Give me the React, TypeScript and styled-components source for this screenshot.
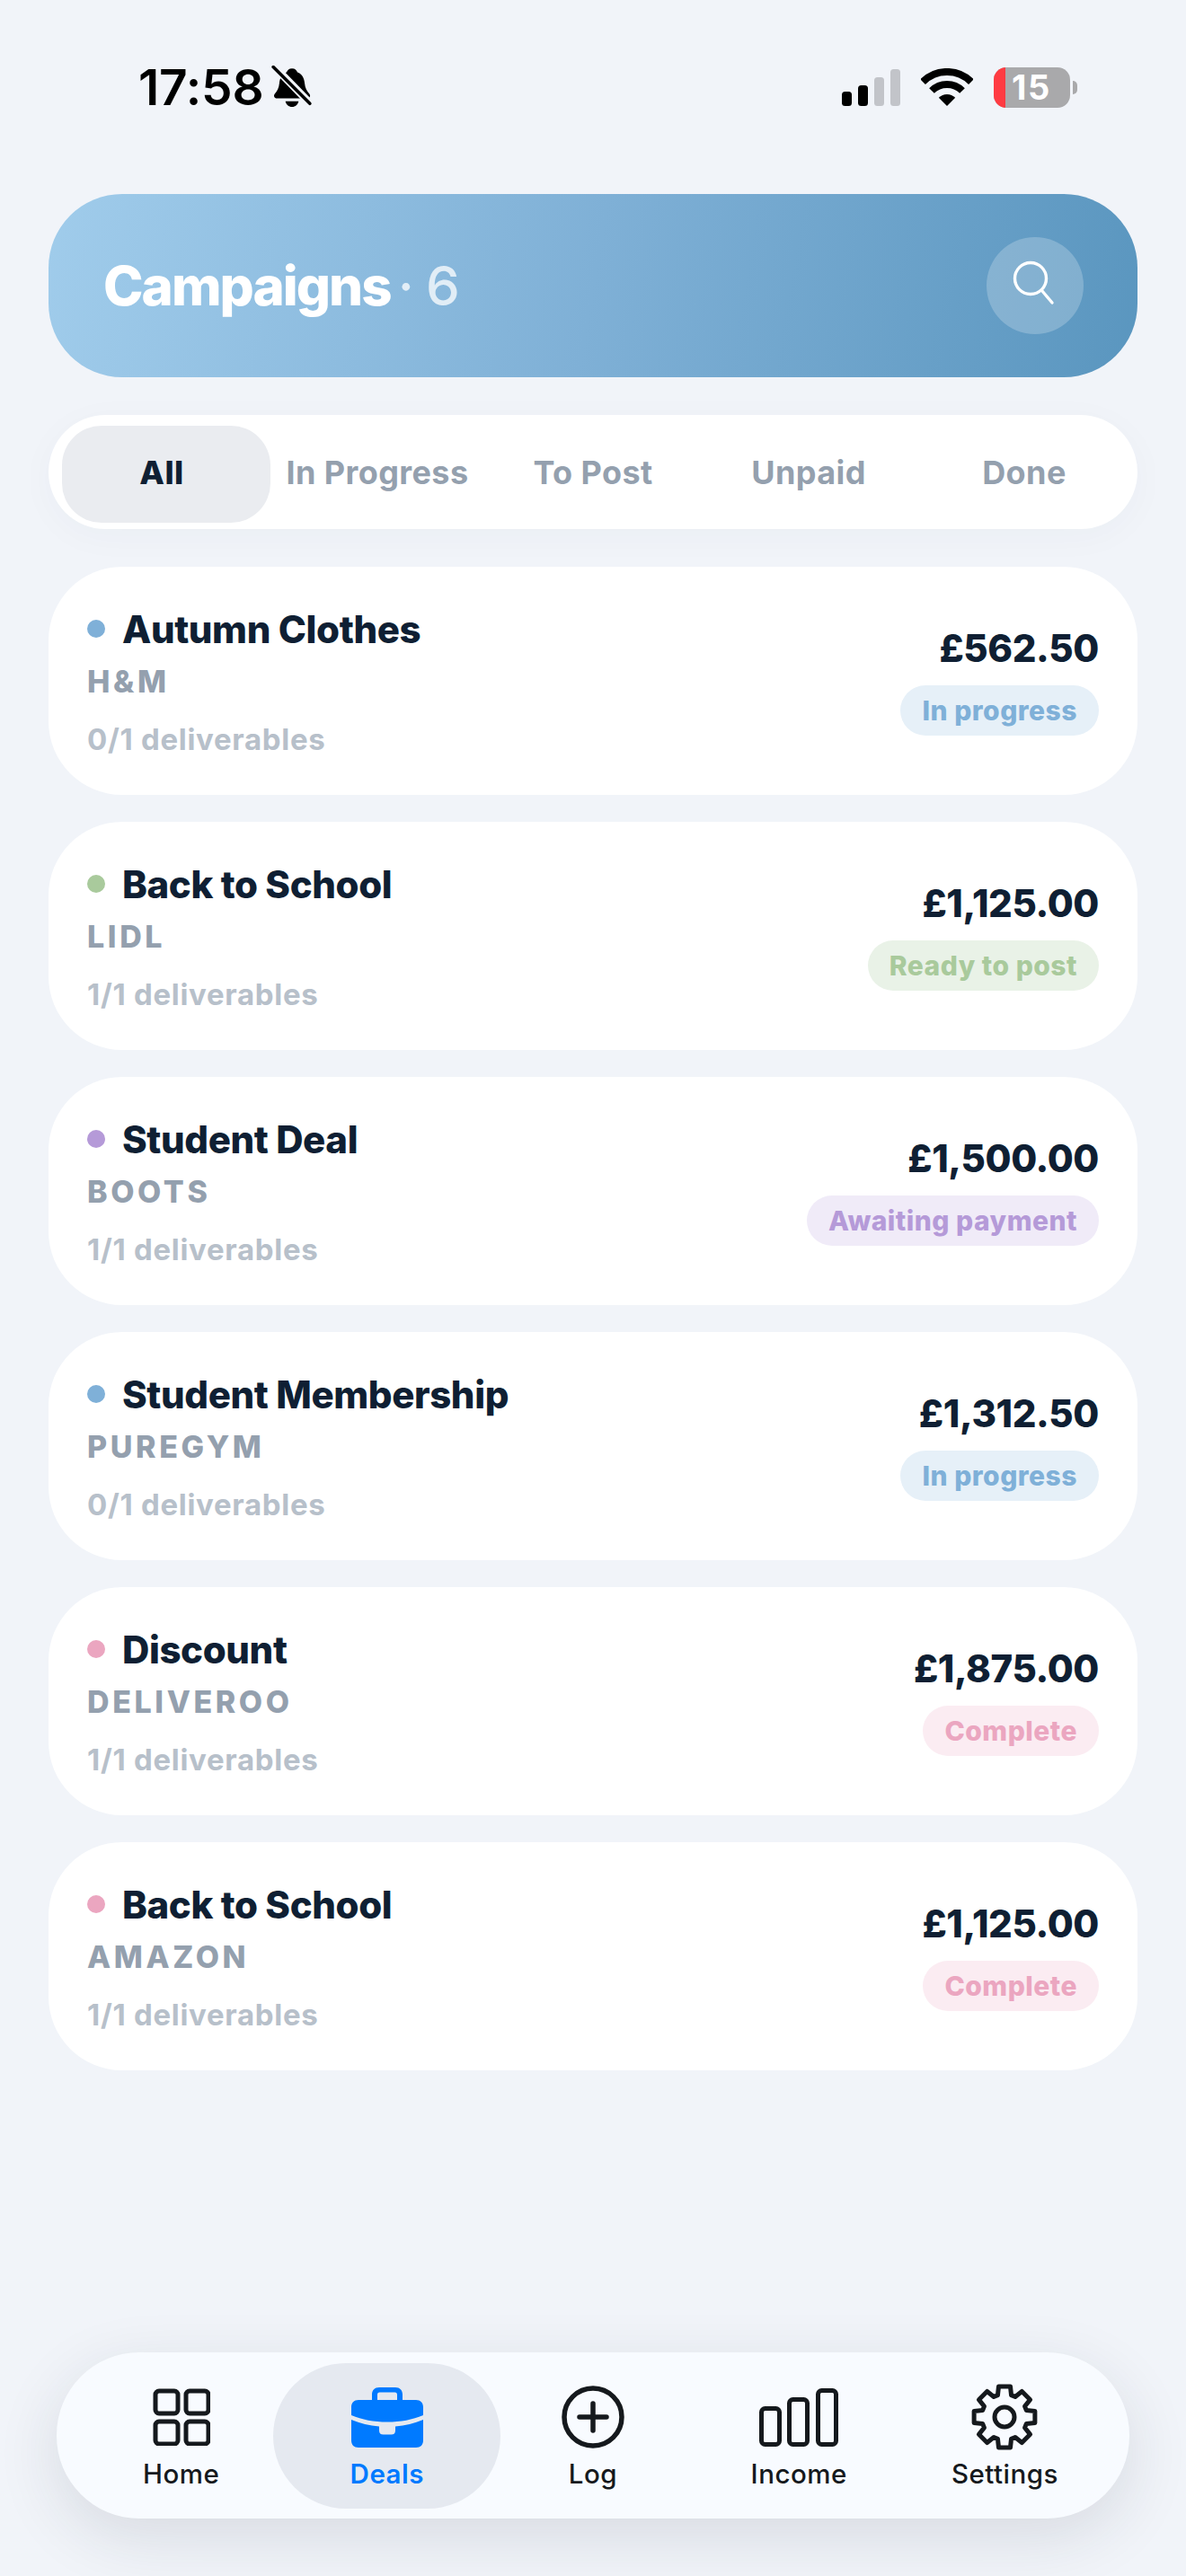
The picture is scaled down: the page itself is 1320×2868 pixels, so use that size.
import * as React from "react";
import styled, { createGlobalStyle } from "styled-components";

type Status = "progress" | "ready" | "awaiting" | "complete";

interface IDeal {
  title: string;
  brand: string;
  deliverables: string;
  price: string;
  status: Status;
}

const statusColors: Record<Status, { main: string; soft: string; label: string }> = {
  progress: { main: "#7fb0d8", soft: "#e6f0f8", label: "In progress" },
  ready: { main: "#a9ca9c", soft: "#e9f2e7", label: "Ready to post" },
  awaiting: { main: "#b59ad8", soft: "#f0ebf8", label: "Awaiting payment" },
  complete: { main: "#eba6c0", soft: "#fbecf2", label: "Complete" },
};

const deals: IDeal[] = [
  { title: "Autumn Clothes", brand: "H&M", deliverables: "0/1 deliverables", price: "£562.50", status: "progress" },
  { title: "Back to School", brand: "LIDL", deliverables: "1/1 deliverables", price: "£1,125.00", status: "ready" },
  { title: "Student Deal", brand: "BOOTS", deliverables: "1/1 deliverables", price: "£1,500.00", status: "awaiting" },
  { title: "Student Membership", brand: "PUREGYM", deliverables: "0/1 deliverables", price: "£1,312.50", status: "progress" },
  { title: "Discount", brand: "DELIVEROO", deliverables: "1/1 deliverables", price: "£1,875.00", status: "complete" },
  { title: "Back to School", brand: "AMAZON", deliverables: "1/1 deliverables", price: "£1,125.00", status: "complete" },
];

const tabs = ["All", "In Progress", "To Post", "Unpaid", "Done"];

// 8 toothed cog outline for the settings tab
const gearPath = (() => {
  const cx = 37;
  const cy = 37;
  const pts: string[] = [];
  for (let i = 0; i < 8; i++) {
    const a = (i * Math.PI) / 4 - Math.PI / 2;
    const add = (r: number, d: number) =>
      pts.push(`${(cx + r * Math.cos(a + d)).toFixed(2)} ${(cy + r * Math.sin(a + d)).toFixed(2)}`);
    add(25.5, -0.3);
    add(34.5, -0.19);
    add(34.5, 0.19);
    add(25.5, 0.3);
  }
  return "M" + pts.join("L") + "Z";
})();

const GlobalStyle = createGlobalStyle`
  html, body {
    margin: 0;
    padding: 0;
    background: #f1f4f9;
  }
  * {
    box-sizing: border-box;
  }
`;

const Screen = styled.div`
  width: 1320px;
  height: 2868px;
  display: flex;
  flex-direction: column;
  background: #f1f4f9;
  font-family: Inter, "Liberation Sans", sans-serif;
  overflow: hidden;
`;

const StatusBar = styled.div`
  height: 216px;
  padding: 72px 121px 0 154px;
  display: flex;
  justify-content: space-between;
  align-items: flex-start;
`;

const TimeGroup = styled.div`
  display: flex;
  align-items: center;
  gap: 9px;
`;

const Time = styled.span`
  font-size: 55px;
  line-height: 50px;
  font-weight: 600;
  color: #000;
  letter-spacing: -0.2px;
`;

const StatusIcons = styled.div`
  display: flex;
  align-items: center;
  gap: 23px;
  height: 50px;
`;

const Battery = styled.div`
  display: flex;
  align-items: center;
  position: relative;
  width: 93px;
  height: 45px;
`;

const BatteryBody = styled.div`
  width: 85px;
  height: 45px;
  border-radius: 14px;
  background: #a9a9ab;
  overflow: hidden;
  display: flex;
  align-items: center;
`;

const BatteryLevel = styled.div`
  width: 13px;
  height: 100%;
  background: #ff3b42;
`;

const BatteryText = styled.span`
  margin-left: 7px;
  font-size: 38px;
  font-weight: 700;
  letter-spacing: 1.5px;
  color: #fff;
`;

const BatteryTip = styled.div`
  width: 5px;
  height: 15px;
  margin-left: 3px;
  border-radius: 0 5px 5px 0;
  background: #a9a9ab;
`;

const Main = styled.div`
  padding: 0 54px;
  display: flex;
  flex-direction: column;
`;

const Hero = styled.header`
  height: 204px;
  border-radius: 82px;
  padding: 0 60px 0 61px;
  display: flex;
  align-items: center;
  justify-content: space-between;
  background: linear-gradient(100deg, #a0cceb 0%, #7fb0d6 50%, #5a96bf 100%);
`;

const HeroTitle = styled.h1`
  margin: 0;
  font-size: 60px;
  font-weight: 800;
  letter-spacing: -2px;
  word-spacing: -3px;
  color: #fff;
`;

const HeroCount = styled.span`
  font-weight: 500;
  letter-spacing: 0;
  color: rgba(255, 255, 255, 0.75);
`;

const SearchButton = styled.button`
  width: 108px;
  height: 108px;
  border: 0;
  padding: 0;
  border-radius: 50%;
  background: rgba(255, 255, 255, 0.22);
  display: flex;
  align-items: center;
  justify-content: center;
`;

const TabBar = styled.nav`
  position: relative;
  margin-top: 42px;
  height: 127px;
  padding: 0 6px;
  border-radius: 64px;
  background: #fff;
  display: grid;
  grid-template-columns: repeat(5, 1fr);
  align-items: center;
  box-shadow: 0 8px 40px rgba(40, 60, 90, 0.03);
`;

const ActivePill = styled.div`
  position: absolute;
  left: 15px;
  top: 12px;
  width: 232px;
  height: 108px;
  border-radius: 44px;
  background: #eaecf0;
`;

const Tab = styled.span<{ $active?: boolean }>`
  position: relative;
  text-align: center;
  font-size: 36px;
  font-weight: ${(p) => (p.$active ? 800 : 700)};
  letter-spacing: 0.4px;
  color: ${(p) => (p.$active ? "#0f1f33" : "#94a0ae")};
`;

const DealList = styled.div`
  margin-top: 42px;
  display: flex;
  flex-direction: column;
  gap: 30px;
`;

const DealCard = styled.article`
  height: 254px;
  border-radius: 82px;
  background: #fff;
  padding: 0 43px;
  display: flex;
  justify-content: space-between;
`;

const DealInfo = styled.div`
  display: flex;
  flex-direction: column;
  padding-top: 45px;
`;

const TitleRow = styled.div`
  display: flex;
  align-items: center;
  gap: 19px;
  height: 48px;
`;

const Dot = styled.span<{ $color: string }>`
  width: 20px;
  height: 20px;
  border-radius: 50%;
  background: ${(p) => p.$color};
`;

const DealTitle = styled.h2`
  margin: 0;
  font-size: 42px;
  font-weight: 800;
  letter-spacing: -0.4px;
  color: #0f1f33;
`;

const Brand = styled.div`
  margin-top: 14px;
  font-size: 34px;
  line-height: 42px;
  font-weight: 800;
  letter-spacing: 3.6px;
  color: #94a0ae;
`;

const Deliverables = styled.div`
  margin-top: 22px;
  font-size: 33px;
  line-height: 42px;
  font-weight: 700;
  letter-spacing: 0.7px;
  color: #b7c0ca;
`;

const DealSide = styled.div`
  display: flex;
  flex-direction: column;
  align-items: flex-end;
  padding-top: 66px;
`;

const Price = styled.div`
  font-size: 42px;
  line-height: 50px;
  font-weight: 800;
  letter-spacing: -0.4px;
  color: #0f1f33;
`;

const Badge = styled.span<{ $status: Status }>`
  margin-top: 16px;
  height: 56px;
  padding: 0 24px;
  border-radius: 28px;
  display: flex;
  align-items: center;
  font-size: 30px;
  font-weight: 800;
  letter-spacing: 0.5px;
  color: ${(p) => statusColors[p.$status].main};
  background: ${(p) => statusColors[p.$status].soft};
`;

const BottomNav = styled.nav`
  position: relative;
  margin: auto 63px 64px;
  height: 185px;
  padding: 0 24px;
  border-radius: 92px;
  background: #f8fbff;
  display: grid;
  grid-template-columns: repeat(5, 1fr);
  box-shadow: 0 20px 70px rgba(30, 40, 55, 0.12);
`;

const NavPill = styled.div`
  position: absolute;
  left: 241px;
  top: 12px;
  width: 253px;
  height: 162px;
  border-radius: 81px;
  background: #e5e9f0;
`;

const NavItem = styled.div<{ $active?: boolean }>`
  position: relative;
  display: flex;
  flex-direction: column;
  align-items: center;
  color: ${(p) => (p.$active ? "#007aff" : "#15191d")};
`;

const NavIconBox = styled.div`
  height: 84px;
  margin-top: 30px;
  display: flex;
  align-items: center;
  justify-content: center;
`;

const NavLabel = styled.span<{ $active?: boolean }>`
  margin-top: 3px;
  font-size: 29.5px;
  line-height: 36px;
  letter-spacing: 0.5px;
  font-weight: ${(p) => (p.$active ? 600 : 500)};
`;

const BellOffIcon = () => (
  <svg width="46" height="48" viewBox="0 0 44 46">
    <path
      d="M22 3c3.200 0 5 2 5.800 4.200C33 9 35 13.500 35.500 19c.4 5 2.200 8 5 11.200 1.600 2 .6 4.800-2.200 4.800H6c-3 0-4-2.800-2.400-4.800C6.400 27 8 24 8.500 19 9 13.500 11 9 16.200 7.200 17 5 18.800 3 22 3Z"
      fill="#000"
    />
    <path d="M15 38h14c-.6 3.400-3.400 6-7 6s-6.400-2.600-7-6Z" fill="#000" />
    <path d="M3 1l38 39" stroke="#f1f4f9" strokeWidth="8" />
    <path d="M2 1.500l39 39" stroke="#000" strokeWidth="3.400" strokeLinecap="round" />
  </svg>
);

const SignalIcon = () => (
  <svg width="65" height="41" viewBox="0 0 65 41">
    <rect x="0" y="25" width="11" height="16" rx="3.500" fill="#000" />
    <rect x="18" y="18" width="11" height="23" rx="3.500" fill="#000" />
    <rect x="36" y="9" width="11" height="32" rx="3.500" fill="#c2c4c9" />
    <rect x="54" y="0" width="11" height="41" rx="3.500" fill="#c2c4c9" />
  </svg>
);

const WifiIcon = () => (
  <svg width="58" height="42" viewBox="0 0 58 42">
    <path d="M2.100 15.100A38 38 0 0 1 55.900 15.100" fill="none" stroke="#000" strokeWidth="8" />
    <path d="M12 25A24 24 0 0 1 46 25" fill="none" stroke="#000" strokeWidth="8" />
    <path d="M29 42L19.800 32.800A13 13 0 0 1 38.200 32.800Z" fill="#000" />
  </svg>
);

const SearchIcon = () => (
  <svg width="50" height="56" viewBox="0 0 50 56" fill="none" stroke="#fff" strokeWidth="3.400" strokeLinecap="round">
    <circle cx="20" cy="20" r="17.500" />
    <path d="M33 34l11 13" />
  </svg>
);

const GridIcon = () => (
  <svg width="64" height="64" viewBox="0 0 64 64" fill="none" stroke="currentColor" strokeWidth="5">
    <rect x="3" y="3" width="25" height="25" rx="4" />
    <rect x="37" y="3" width="25" height="25" rx="4" />
    <rect x="3" y="37" width="25" height="25" rx="4" />
    <rect x="37" y="37" width="25" height="25" rx="4" />
  </svg>
);

const BriefcaseIcon = () => (
  <svg width="80" height="68" viewBox="0 0 80 68" fill="currentColor">
    <path
      fillRule="evenodd"
      d="M23 15V9c0-5 3-8 8-8h18c5 0 8 3 8 8v6h15c5 0 8 3 8 8v9c-12 5-25 7.500-40 7.500S12 37 0 32v-9c0-5 3-8 8-8h15Zm6 0h22V9c0-1.500-.8-2.500-2.500-2.500h-17C29.800 6.500 29 7.500 29 9v6Z"
    />
    <path d="M0 37c10 4 20 6.500 31 7.500V49c0 3 1.500 4.500 4.500 4.500h9c3 0 4.500-1.500 4.500-4.500v-4.500c11-1 21-3.500 31-7.500v23c0 5-3 8-8 8H8c-5 0-8-3-8-8V37Z" />
  </svg>
);

const PlusCircleIcon = () => (
  <svg width="70" height="70" viewBox="0 0 70 70" fill="none" stroke="currentColor" strokeWidth="5.500" strokeLinecap="round">
    <circle cx="35" cy="35" r="32" />
    <path d="M35 20v30M20 35h30" />
  </svg>
);

const BarsIcon = () => (
  <svg width="88" height="65" viewBox="0 0 88 65" fill="none" stroke="currentColor" strokeWidth="5">
    <rect x="2.500" y="22.500" width="20" height="40" rx="4" />
    <rect x="33.500" y="12.500" width="20" height="50" rx="4" />
    <rect x="65.500" y="2.500" width="20" height="60" rx="4" />
  </svg>
);

const GearIcon = () => (
  <svg width="74" height="74" viewBox="0 0 74 74" fill="none" stroke="currentColor" strokeWidth="5" strokeLinejoin="round">
    <path d={gearPath} />
    <circle cx="37" cy="37" r="11" />
  </svg>
);

const navItems = [
  { label: "Home", icon: <GridIcon /> },
  { label: "Deals", icon: <BriefcaseIcon />, active: true },
  { label: "Log", icon: <PlusCircleIcon /> },
  { label: "Income", icon: <BarsIcon /> },
  { label: "Settings", icon: <GearIcon /> },
];

export default function App() {
  return (
    <Screen>
      <GlobalStyle />
      <StatusBar>
        <TimeGroup>
          <Time>17:58</Time>
          <BellOffIcon />
        </TimeGroup>
        <StatusIcons>
          <SignalIcon />
          <WifiIcon />
          <Battery>
            <BatteryBody>
              <BatteryLevel />
              <BatteryText>15</BatteryText>
            </BatteryBody>
            <BatteryTip />
          </Battery>
        </StatusIcons>
      </StatusBar>

      <Main>
        <Hero>
          <HeroTitle>
            Campaigns <HeroCount>· 6</HeroCount>
          </HeroTitle>
          <SearchButton aria-label="Search">
            <SearchIcon />
          </SearchButton>
        </Hero>

        <TabBar>
          <ActivePill />
          {tabs.map((tab, i) => (
            <Tab key={tab} $active={i === 0}>
              {tab}
            </Tab>
          ))}
        </TabBar>

        <DealList>
          {deals.map((deal) => (
            <DealCard key={deal.brand}>
              <DealInfo>
                <TitleRow>
                  <Dot $color={statusColors[deal.status].main} />
                  <DealTitle>{deal.title}</DealTitle>
                </TitleRow>
                <Brand>{deal.brand}</Brand>
                <Deliverables>{deal.deliverables}</Deliverables>
              </DealInfo>
              <DealSide>
                <Price>{deal.price}</Price>
                <Badge $status={deal.status}>{statusColors[deal.status].label}</Badge>
              </DealSide>
            </DealCard>
          ))}
        </DealList>
      </Main>

      <BottomNav>
        <NavPill />
        {navItems.map((item) => (
          <NavItem key={item.label} $active={item.active}>
            <NavIconBox>{item.icon}</NavIconBox>
            <NavLabel $active={item.active}>{item.label}</NavLabel>
          </NavItem>
        ))}
      </BottomNav>
    </Screen>
  );
}
